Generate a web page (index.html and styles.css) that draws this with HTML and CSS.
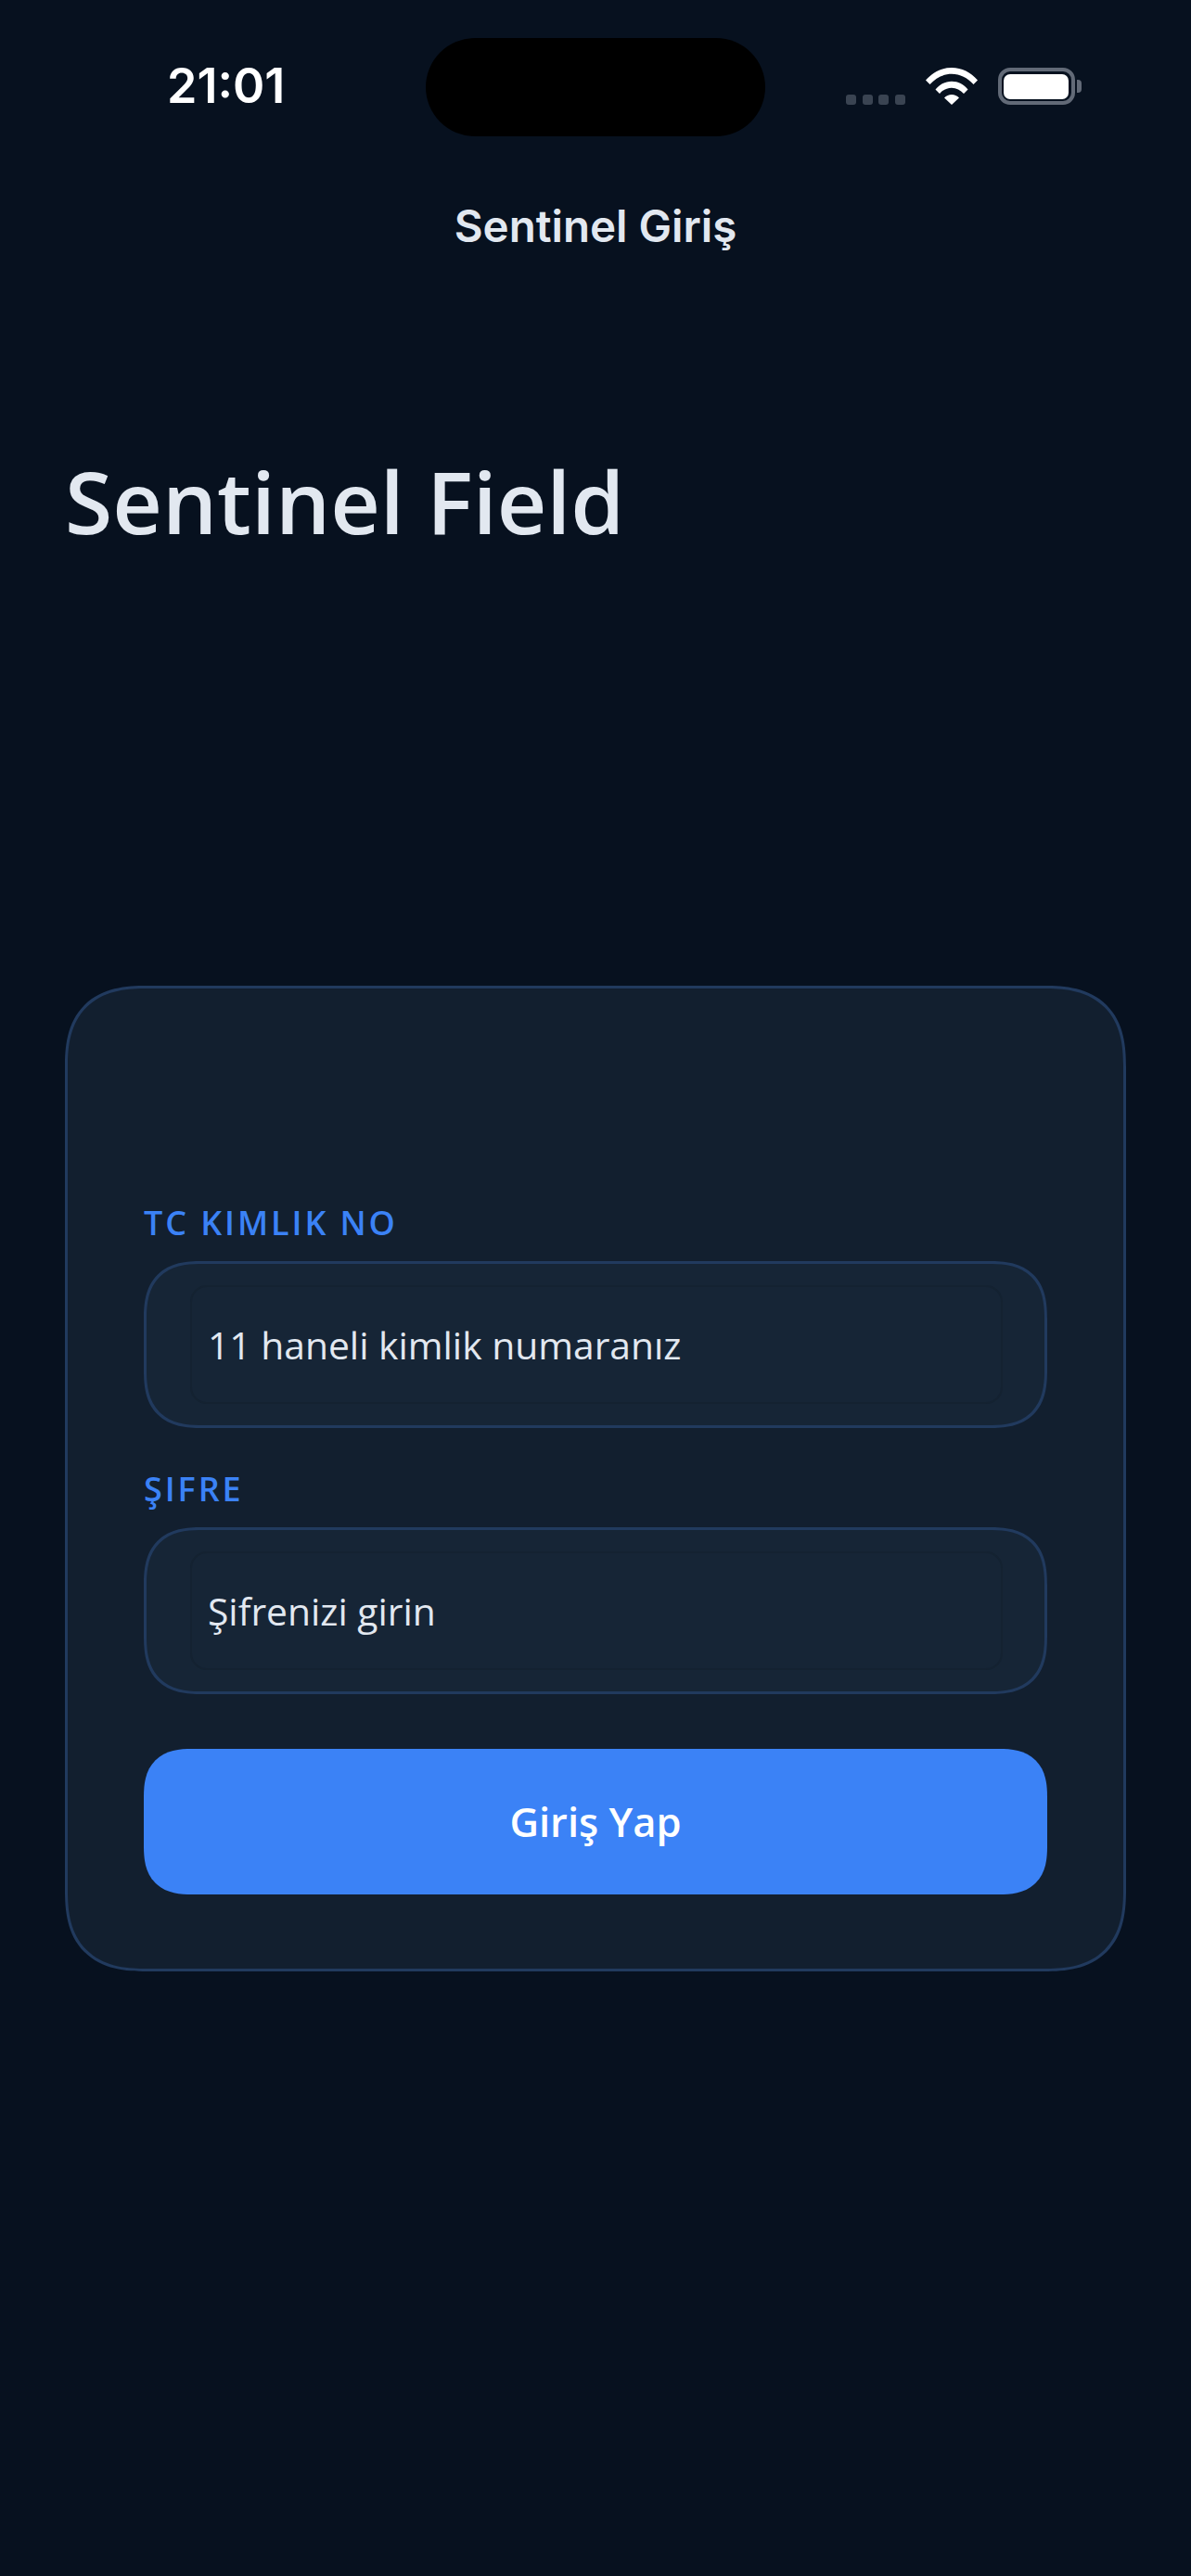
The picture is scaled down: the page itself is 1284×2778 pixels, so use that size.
FILE: index.html
```html
<!DOCTYPE html>
<html lang="tr">
<head>
<meta charset="utf-8">
<title>Sentinel Giriş</title>
<link rel="stylesheet" href="styles.css">
</head>
<body>
<main class="screen">
  <header class="status">
    <span class="time">21:01</span>
    <div class="island"></div>
    <div class="status-icons">
      <div class="signal"><i></i><i></i><i></i><i></i></div>
      <svg class="wifi" viewBox="0 0 56 40" width="56" height="40" aria-hidden="true">
        <path fill="#fff" d="M0 13.5 C7.5 4.8 17 0 28 0 C39 0 48.5 4.8 56 13.5 L51.5 18 C45 11 37 6.8 28 6.8 C19 6.8 11 11 4.500 18 Z"/>
        <path fill="#fff" d="M10.500 23.500 C15 18 21 14.800 28 14.800 C35 14.800 41 18 45.500 23.500 L41 28 C37.500 24 33 21.700 28 21.700 C23 21.700 18.500 24 15 28 Z"/>
        <path fill="#fff" d="M20 32.500 C22 30.200 25 28.900 28 28.900 C31 28.900 34 30.200 36 32.500 L28 40 Z"/>
      </svg>
      <div class="battery"><div class="battery-body"><div class="battery-fill"></div></div><div class="battery-nub"></div></div>
    </div>
  </header>
  <div class="nav-title">Sentinel Giriş</div>
  <h1 class="page-title">Sentinel Field</h1>
  <section class="card">
    <label class="label">TC KIMLIK NO</label>
    <div class="field"><div class="field-inner"><input class="input" placeholder="11 haneli kimlik numaranız"></div></div>
    <label class="label label-second">ŞIFRE</label>
    <div class="field"><div class="field-inner"><input class="input" type="password" placeholder="Şifrenizi girin"></div></div>
    <button class="submit">Giriş Yap</button>
  </section>
</main>
</body>
</html>
```
FILE: styles.css
```css
* { box-sizing: border-box; }
html, body { margin: 0; padding: 0; }
body { background: #07111f; font-family: "Open Sans", sans-serif; }
.screen { width: 1284px; height: 2778px; display: flex; flex-direction: column; overflow: hidden; background: #07111f; }

.status { display: flex; align-items: flex-start; height: 147px; padding-top: 41px; }
.time { width: 459px; padding: 21px 0 0 180px; font: 600 52px/62px Inter, sans-serif; color: #fff; }
.island { width: 366px; height: 106px; border-radius: 53px; background: #000; }
.status-icons { display: flex; align-items: flex-end; margin: 32px 0 0 87px; }
.signal { display: flex; gap: 6.5px; margin-right: 22px; }
.signal i { display: block; width: 11px; height: 11px; border-radius: 3px; background: #3a4452; }
.wifi { display: block; margin-right: 22px; }
.battery { display: flex; align-items: center; }
.battery-body { width: 83px; height: 40px; border: 4px solid #626a77; border-radius: 13px; padding: 2.500px; }
.battery-fill { width: 100%; height: 100%; background: #fff; border-radius: 7px; }
.battery-nub { width: 5px; height: 14px; margin-left: 2px; background: #626a77; border-radius: 0 4px 4px 0; }

.nav-title { margin-top: 68px; text-align: center; font: 600 47.500px/58px Inter, sans-serif; color: #e2e8f0; }
.page-title { margin: 202px 0 0 70px; font: 600 93.200px/130px "Open Sans", sans-serif; color: #e2e8f0; }

.card { margin: 458px 70px 0; height: 1063px; padding: 228px 82px 0; background: #121f2f; border: 3px solid #213a5e; border-radius: 88px; corner-shape: superellipse(1.35); display: flex; flex-direction: column; }
.label { display: block; font: 600 36px/50px "Open Sans", sans-serif; color: #3b82f6; letter-spacing: 2.900px; }
.label-second { margin-top: 41px; }
.field { margin-top: 16px; height: 180px; padding: 23px 45px 23px 47px; background: #162536; border: 3px solid #213a5e; border-radius: 62px; corner-shape: superellipse(1.35); }
.field-inner { height: 100%; border: 2px solid #142231; border-radius: 18px; display: flex; align-items: center; }
.input { flex: 1; min-width: 0; border: 0; outline: 0; padding: 0 0 0 17px; background: transparent; font: 400 40.800px/56px "Open Sans", sans-serif; color: #e2e8f0; }
.input::placeholder { color: #e2e8f0; opacity: 1; }
.submit { margin-top: 59px; height: 157px; border: 0; border-radius: 52px; corner-shape: superellipse(1.35); background: #3b82f6; color: #fff; font: 600 43.500px/60px "Open Sans", sans-serif; }
```
